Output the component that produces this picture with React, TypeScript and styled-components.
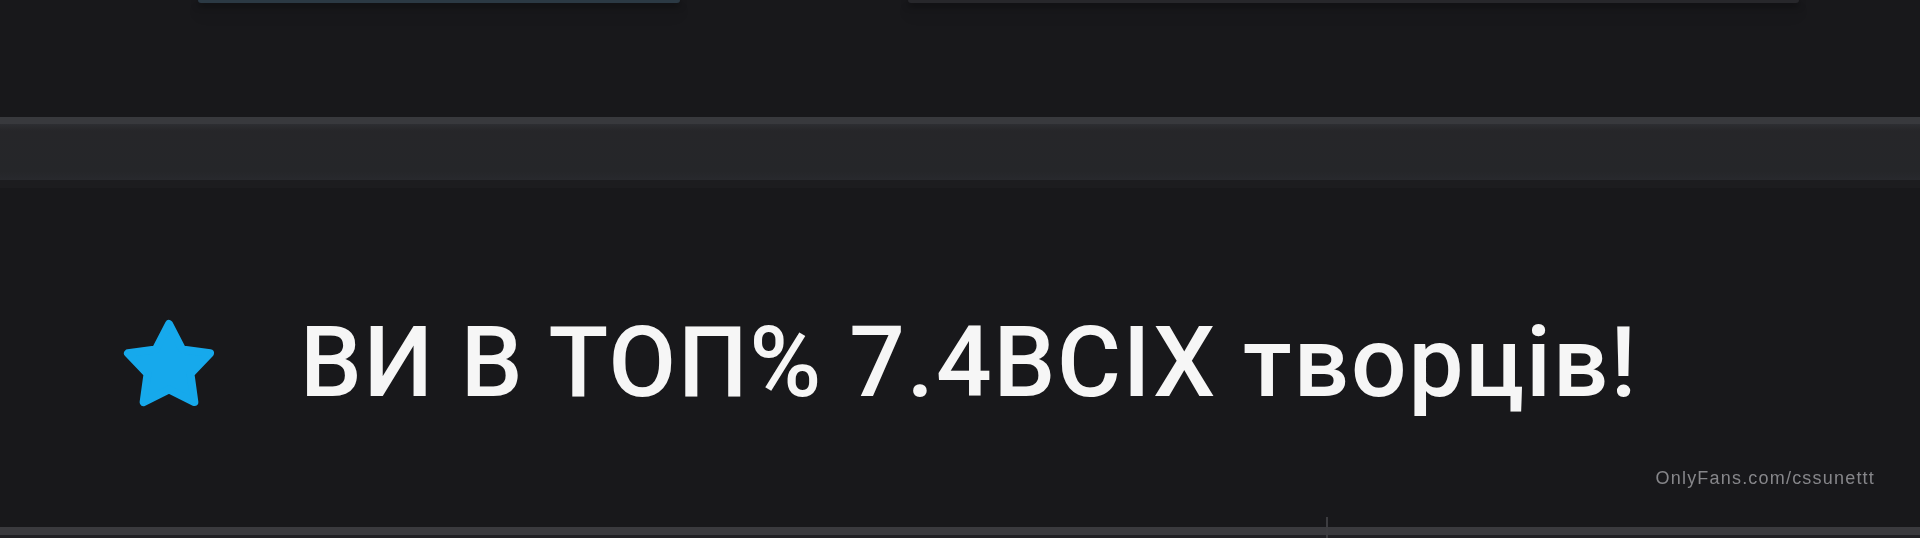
import React from "react";
import styled, { createGlobalStyle } from "styled-components";

const GlobalStyle = createGlobalStyle`
  html, body {
    margin: 0;
    padding: 0;
    background: #18181b;
  }
  body {
    font-family: Roboto, "Noto Sans", "DejaVu Sans", sans-serif;
    color: #f4f4f4;
  }
`;

const Page = styled.div`
  width: 1920px;
  height: 538px;
  overflow: hidden;
  display: flex;
  flex-direction: column;
  background: #18181b;
`;

const TopRow = styled.div`
  display: flex;
  height: 117px;
  padding-left: 198px;
  gap: 228px;
  box-sizing: border-box;
`;

const TopButton = styled.div<{ $width: number; $tone: string }>`
  width: ${(p) => p.$width}px;
  height: 3px;
  background: ${(p) => p.$tone};
  box-shadow: 0 3px 6px rgba(0, 0, 0, 0.55), 0 10px 14px rgba(0, 0, 0, 0.2);
  border-radius: 0 0 4px 4px;
`;

const Divider = styled.div`
  height: 71px;
  display: flex;
  flex-direction: column;
`;

const DividerEdge = styled.div<{ $h: number; $c: string }>`
  height: ${(p) => p.$h}px;
  background: ${(p) => p.$c};
`;

const DividerBody = styled.div`
  flex: 1;
  background: linear-gradient(180deg, #2d2e32 0%, #262629 12%, #252629 85%, #28292d 100%);
`;

const Content = styled.div`
  flex: 1;
  display: flex;
  flex-direction: column;
`;

const Badge = styled.div`
  display: flex;
  align-items: center;
  height: 98px;
  padding: 126px 0 0 120px;
  gap: 82px;
`;

const Star = styled.svg`
  width: 98px;
  height: 92px;
  flex: none;
`;

const Headline = styled.div`
  font-family: Roboto, "Noto Sans", sans-serif;
  font-size: 98px;
  line-height: 1;
  font-weight: 500;
  color: #f6f6f6;
  white-space: nowrap;
  letter-spacing: 1.8px;
`;

const WatermarkRow = styled.div`
  flex: 1;
  display: flex;
  justify-content: flex-end;
  align-items: flex-start;
  padding: 56px 45px 0 0;
`;

const Watermark = styled.span`
  font-family: "Liberation Sans", Arial, sans-serif;
  font-size: 18px;
  letter-spacing: 1.2px;
  color: #86868a;
  filter: blur(0.7px);
`;

const BottomLine = styled.div`
  height: 11px;
  display: flex;
  flex-direction: column;
  position: relative;
`;

const Tick = styled.div`
  position: absolute;
  left: 1326px;
  top: -10px;
  width: 2px;
  height: 21px;
  background: #3c3c40;
`;

const StarIcon = () => (
  <Star viewBox="0 0 100 94">
    <polygon
      points="50,7 63.5,33 92,37 72,58 76,87 50,74 24,87 28,58 8,37 36.5,33"
      fill="#16a9ec"
      stroke="#16a9ec"
      strokeWidth="8"
      strokeLinejoin="round"
    />
  </Star>
);

export default function App() {
  return (
    <>
      <GlobalStyle />
      <Page>
        <TopRow>
          <TopButton $width={482} $tone="#2b3944" />
          <TopButton $width={891} $tone="#27272b" />
        </TopRow>
        <Divider>
          <DividerEdge $h={7} $c="#38393d" />
          <DividerBody />
          <DividerEdge $h={8} $c="#1c1c1f" />
        </Divider>
        <Content>
          <Badge>
            <StarIcon />
            <Headline>ВИ В ТОП% 7.4ВСІХ творців!</Headline>
          </Badge>
          <WatermarkRow>
            <Watermark>OnlyFans.com/cssunettt</Watermark>
          </WatermarkRow>
          <BottomLine>
            <DividerEdge $h={8} $c="#3a3a3e" />
            <DividerEdge $h={3} $c="#202024" />
            <Tick />
          </BottomLine>
        </Content>
      </Page>
    </>
  );
}
